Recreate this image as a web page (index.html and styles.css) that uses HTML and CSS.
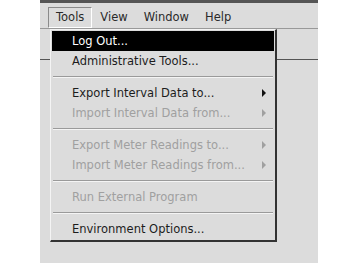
FILE: index.html
```html
<!DOCTYPE html>
<html lang="en">

<head>
    <meta charset="UTF-8">
    <title>Tools Menu</title>
    <link rel="stylesheet" href="styles.css">
</head>

<body>

    <div class="screen">
        <div class="menubar">
            <span class="menubar-item open">Tools</span>
            <span class="menubar-item">View</span>
            <span class="menubar-item">Window</span>
            <span class="menubar-item">Help</span>
        </div>
        <div class="toolbar"></div>

        <div class="dropdown">
            <div class="row selected">Log Out...</div>
            <div class="row">Administrative Tools...</div>
            <div class="separator"></div>
            <div class="row">Export Interval Data to...<span class="arrow"></span></div>
            <div class="row disabled">Import Interval Data from...<span class="arrow"></span></div>
            <div class="separator"></div>
            <div class="row disabled">Export Meter Readings to...<span class="arrow"></span></div>
            <div class="row disabled">Import Meter Readings from...<span class="arrow"></span></div>
            <div class="separator"></div>
            <div class="row disabled">Run External Program</div>
            <div class="separator"></div>
            <div class="row">Environment Options...</div>
        </div>
    </div>

</body>

</html>
```

FILE: styles.css
```css
body {
    margin: 0;
    background-color: #fff;
    font-family: "DejaVu Sans", Verdana, sans-serif;
    font-size: 11.5px;
}

.screen {
    position: relative;
    margin-left: 40px;
    width: 278px;
    height: 260px;
    background-color: #dcdcdc;
    border-top: 3px solid #555;
}

.menubar {
    display: flex;
    height: 25px;
    padding-left: 8px;
    align-items: flex-end;
}

.menubar-item {
    padding: 2px 7px 3px 7px;
    color: #2a2a2a;
    border: 1px solid transparent;
}

.menubar-item.open {
    border-top-color: #8a8a8a;
    border-left-color: #8a8a8a;
    border-right-color: #fff;
    border-bottom-color: #fff;
}

.toolbar {
    height: 30px;
    border-top: 1px solid #999;
    border-bottom: 1px solid #555;
}

.dropdown {
    position: absolute;
    left: 10px;
    top: 26px;
    width: 222px;
    padding: 1px;
    background-color: #dcdcdc;
    border-top: 1px solid #f4f4f4;
    border-left: 1px solid #f4f4f4;
    border-right: 2px solid #333;
    border-bottom: 2px solid #333;
}

.row {
    position: relative;
    height: 20px;
    line-height: 20px;
    padding-left: 20px;
    color: #1c1c1c;
}

.row.selected {
    background-color: #000;
    color: #fff;
}

.row.disabled {
    color: #a0a0a0;
}

.arrow {
    position: absolute;
    right: 8px;
    top: 6px;
    width: 0;
    height: 0;
    border-top: 4px solid transparent;
    border-bottom: 4px solid transparent;
    border-left: 4px solid #111;
}

.row.disabled .arrow {
    border-left-color: #a0a0a0;
}

.separator {
    height: 12px;
    position: relative;
}

.separator::after {
    content: "";
    position: absolute;
    left: 1px;
    right: 1px;
    top: 5px;
    height: 1px;
    background-color: #9a9a9a;
    border-bottom: 1px solid #f4f4f4;
}
```
